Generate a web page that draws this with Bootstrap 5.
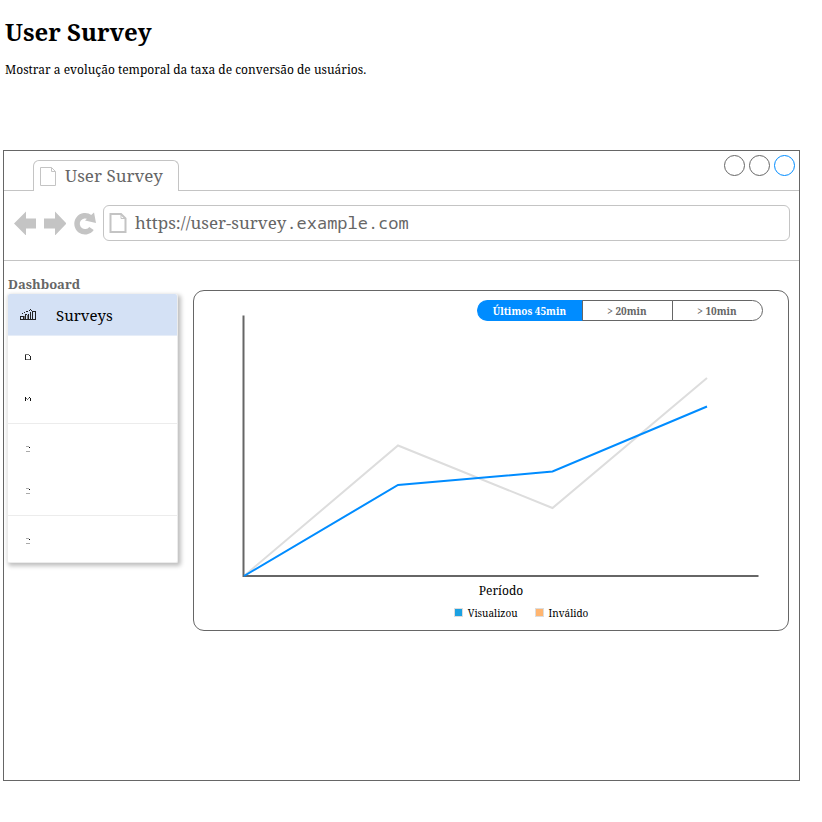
<!DOCTYPE html>
<html lang="pt-BR">
<head>
<meta charset="utf-8">
<meta name="viewport" content="width=device-width, initial-scale=1">
<title>User Survey</title>
<link href="https://cdn.jsdelivr.net/npm/bootstrap@5.3.0/dist/css/bootstrap.min.css" rel="stylesheet">
<style>
  body { font-family: "Noto Serif", "Droid Serif", "Liberation Serif", serif; font-size: 12px; line-height: 16px; color: #000; background: #fff; }
  .intro { padding: 16px 5px 0; min-height: 150px; }
  .intro h1 { font-size: 24px; line-height: 32px; font-weight: 700; margin-bottom: 14px; }
  .browser { margin: 0 22px 40px 3px; border: 1px solid #666; min-height: 631px; color: #666; }
  .tab-strip { height: 40px; border-bottom: 1px solid #c4c4c4; padding: 0 4px 0 29px; }
  .site-tab { width: 146px; height: 31px; margin-bottom: -1px; padding: 0 6px; gap: 8px; border: 1px solid #c4c4c4; border-bottom: 0; border-radius: 6px 6px 0 0; background: #fff; color: #666; font-size: 17px; line-height: 24px; text-decoration: none; }
  .win-btn { width: 21px; height: 21px; padding: 0; border: 1px solid #666; border-radius: 50%; background: #fff; }
  .win-btn.current { border-color: #008cff; }
  .tool-row { height: 70px; border-bottom: 1px solid #c4c4c4; padding: 14px 9px 0 10px; }
  .tool-btn { height: 36px; padding: 0; border: 0; background: none; line-height: 0; }
  .address { height: 36px; border: 1px solid #c4c4c4; border-radius: 6px; padding: 0 5px; font-size: 17px; line-height: 24px; }
  .address input { font-family: "Noto Sans Mono", "DejaVu Sans Mono", monospace; font-size: 17px; color: #666; border: 0; padding: 0; background: none; outline: 0; min-width: 0; }
  .content-row { padding: 14px 10px 24px 4px; gap: 15px; }
  .side { width: 170px; }
  .side h2 { font-size: 13px; line-height: 18px; font-weight: 700; margin: 0 0 1px; }
  .side-menu { box-shadow: 2px 2px 4px 1px rgba(0,0,0,.25); background: #fff; border: 1px solid #ececec; border-top: 0; border-radius: 2px; margin-left: -1px; }
  .side-link { height: 42px; color: #000; font-size: 15px; line-height: 20px; text-decoration: none; padding-bottom: 1px; }
  .side-link.current { background: #d4e1f5; border-radius: 2px 2px 0 0; border-bottom: 1px solid #e6edf8; padding-bottom: 0; }
  .side-icon { width: 40px; line-height: 0; }
  .side-link svg { shape-rendering: crispEdges; }
  .side-rule { height: 8px; padding-top: 3px; }
  .side-rule::before { content: ""; display: block; border-top: 1px solid #ececec; }
  .panel { border: 1px solid #666; border-radius: 11px; margin: 15px 0 0; padding: 9px 25px 10px 0; min-width: 0; color: #000; }
  .range .btn { font-family: inherit; font-size: 10px; line-height: 19px; font-weight: 700; padding: 1px 1px 0 0; height: 21px; width: 91px; color: #666; border: 1px solid #666; background: #fff; }
  .range .btn:first-of-type { width: 106px; border-radius: 11px 0 0 11px; }
  .range .btn:last-of-type { border-radius: 0 11px 11px 0; }
  .range .btn-check:checked + .btn { background: #008cff; border-color: #008cff #666 #008cff #008cff; color: #fff; }
  .plot { display: block; width: 100%; height: auto; overflow: visible; }
  .axis-name { padding: 1px 0 0 45px; }
  .legend-row { gap: 17px; font-size: 10px; line-height: 14px; padding-left: 85px; margin-top: 7px; }
  .legend-row span { gap: 5px; }
  .swatch { width: 9px; height: 9px; margin-bottom: 2px; border: 1px solid #ddd; }
  .swatch.seen { background: #1ba1e2; }
  .swatch.invalid { background: #ffb570; }
</style>
<script src="https://cdn.jsdelivr.net/npm/bootstrap@5.3.0/dist/js/bootstrap.bundle.min.js" defer></script>
</head>
<body>
<header class="intro">
  <h1>User Survey</h1>
  <p class="mb-0">Mostrar a evolução temporal da taxa de conversão de usuários.</p>
</header>

<main class="browser">
  <div class="tab-strip d-flex justify-content-between align-items-end">
    <a href="#" class="site-tab d-flex align-items-center">
      <svg width="17" height="20" viewBox="0 0 17 20" fill="none" stroke="#c4c4c4" aria-hidden="true"><path d="M.5 1.5h11l4 4v14H.5zM11.5 1.5v4h4"/></svg>
      <span class="text-nowrap">User Survey</span>
    </a>
    <div class="d-flex gap-1 align-self-start mt-1">
      <button type="button" class="win-btn" aria-label="Minimizar"></button>
      <button type="button" class="win-btn" aria-label="Maximizar"></button>
      <button type="button" class="win-btn current" aria-label="Fechar"></button>
    </div>
  </div>

  <div class="tool-row d-flex align-items-start">
    <button type="button" class="tool-btn me-2" aria-label="Voltar"><svg width="22" height="24" viewBox="0 0 22 24"><path fill="#c4c4c4" d="M0 12.500 12 .5v7h10.500v10H12v7z"/></svg></button>
    <button type="button" class="tool-btn me-2" aria-label="Avançar"><svg width="22" height="24" viewBox="0 0 22 24"><path fill="#c4c4c4" d="M22.500 12.500 11 .5v7H0v10h11v7z"/></svg></button>
    <button type="button" class="tool-btn me-2" aria-label="Recarregar"><svg width="21" height="24" viewBox="0 0 21 24" overflow="visible"><path fill="none" stroke="#c4c4c4" stroke-width="5.5" d="M16 6.500A8 8 0 1 0 17.500 17.500"/><path fill="#c4c4c4" d="M20 1.500 22 12 11 9.500z"/></svg></button>
    <div class="address d-flex align-items-center flex-grow-1">
      <svg class="me-2 flex-shrink-0" width="18" height="20" viewBox="0 0 18 20" fill="none" stroke="#c4c4c4" aria-hidden="true"><path stroke-width="2" d="M1.500 1h10.500l4.500 4.500V19h-15z"/><path d="M12 1v4.500h4.500"/></svg>
      <label for="host" class="text-nowrap">https://user-survey</label>
      <input id="host" type="text" class="flex-grow-1" value=".example.com">
    </div>
  </div>

  <div class="content-row d-flex align-items-start">
    <nav class="side flex-shrink-0" aria-label="Dashboard">
      <h2>Dashboard</h2>
      <div class="side-menu d-flex flex-column">
        <a href="#" class="side-link current d-flex align-items-center">
          <span class="side-icon text-center me-2"><svg width="16" height="11" viewBox="0 0 16 11" fill="none" stroke="#222" aria-hidden="true"><path d="M0 10.500h16M.5 10V7.500h3V10M5.500 10V5.500h1M8.500 10V4.500M10.500 10V2.500M12.500 10V2.500h3V10"/><path stroke="#777" d="M4.500 10V6.500M7.500 10V5.500"/><path d="M2 4.500h1M4 3.500h1M6 2.500h2M9 1.500h1M10 .5h1M11 1.500h1"/></svg></span>
          <span>Surveys</span>
        </a>
        <a href="#" class="side-link d-flex align-items-center" aria-label="Documentos"><span class="side-icon text-center"><svg width="6" height="6" viewBox="0 0 6 6" fill="none" stroke="#222"><path d="M.5 1v5M5.500 2v4M4 1.500h1"/><path stroke="#777" d="M0 .5h4M1 5.500h4"/></svg></span></a>
        <a href="#" class="side-link d-flex align-items-center" aria-label="Imagens"><span class="side-icon text-center"><svg width="6" height="4" viewBox="0 0 6 4" fill="none" stroke="#111"><path d="M.5 0v4M5.500 1v3M4 .5h1"/><path stroke="#777" d="M1 1.500h1M2 2.500h1M3 1.500h1"/></svg></span></a>
        <div class="side-rule"></div>
        <a href="#" class="side-link d-flex align-items-center" aria-label="Item 1"><span class="side-icon text-center"><svg width="4" height="6" viewBox="0 0 4 6"><path fill="#aaa" d="M0 0h3v1H0zM0 5h4v1H0z"/><path d="M3 1h1v1H3z"/></svg></span></a>
        <a href="#" class="side-link d-flex align-items-center" aria-label="Item 2"><span class="side-icon text-center"><svg width="4" height="6" viewBox="0 0 4 6"><path fill="#aaa" d="M0 0h3v1H0zM0 5h4v1H0z"/><path d="M3 1h1v1H3z"/></svg></span></a>
        <div class="side-rule"></div>
        <a href="#" class="side-link d-flex align-items-center" aria-label="Item 3"><span class="side-icon text-center"><svg width="4" height="6" viewBox="0 0 4 6"><path fill="#aaa" d="M0 0h3v1H0zM0 5h4v1H0z"/><path d="M3 1h1v1H3z"/></svg></span></a>
      </div>
    </nav>

    <figure class="panel flex-grow-1">
      <div class="range d-flex justify-content-end">
        <div class="btn-group" role="group" aria-label="Período">
          <input type="radio" class="btn-check" name="range" id="r45" checked><label class="btn" for="r45">Últimos 45min</label>
          <input type="radio" class="btn-check" name="range" id="r20"><label class="btn" for="r20">&gt; 20min</label>
          <input type="radio" class="btn-check" name="range" id="r10"><label class="btn" for="r10">&gt; 10min</label>
        </div>
      </div>
      <svg class="plot" viewBox="194 321 569 261" fill="none" stroke-width="2" role="img" aria-label="Evolução por período">
        <path stroke="#ddd" d="m244 576 154-130.500 154.500 62.500L707 378"/>
        <path stroke="#666" d="M243.500 315.500V576H758.500"/>
        <path stroke="#008cff" d="m244 576 154-91 154.500-13.500L707 406.500"/>
      </svg>
      <figcaption class="text-center">
        <div class="axis-name">Período</div>
        <div class="legend-row d-flex justify-content-center">
          <span class="d-flex align-items-center"><span class="swatch seen"></span>Visualizou</span>
          <span class="d-flex align-items-center"><span class="swatch invalid"></span>Inválido</span>
        </div>
      </figcaption>
    </figure>
  </div>
</main>
</body>
</html>
